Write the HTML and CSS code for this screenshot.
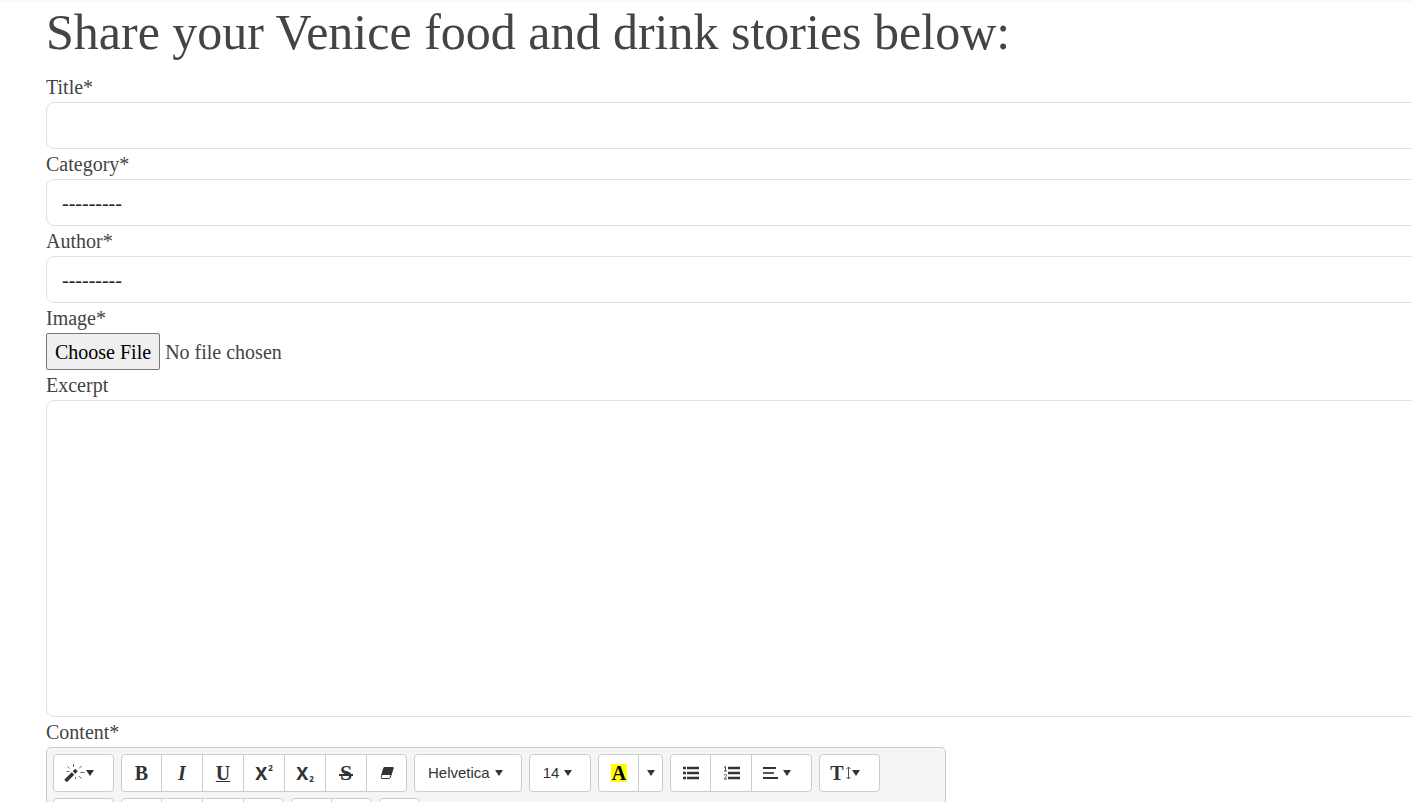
FILE: index.html
```html
<!DOCTYPE html>
<html lang="en">
<head>
<meta charset="utf-8">
<title>Share your story</title>
<link rel="stylesheet" href="styles.css">
</head>
<body>
<main class="page">
  <h1 class="heading">Share your Venice food and drink stories below:</h1>
  <form class="story-form">
    <label class="label" for="title">Title*</label>
    <input class="control" id="title" type="text">
    <label class="label" for="category">Category*</label>
    <select class="control" id="category"><option>---------</option></select>
    <label class="label" for="author">Author*</label>
    <select class="control" id="author"><option>---------</option></select>
    <label class="label" for="image">Image*</label>
    <input class="file" id="image" type="file">
    <label class="label" for="excerpt">Excerpt</label>
    <textarea class="control area" id="excerpt" rows="10"></textarea>
    <label class="label" for="content">Content*</label>
    <div class="editor" id="content">
      <div class="toolbar">
        <div class="group">
          <button class="tool wide" type="button"><svg width="22" height="20" viewBox="0 0 22 20"><path d="M1.500 18 9 10.500" stroke="#333" stroke-width="3.600"/><path d="M10 9.500 12.500 7" stroke="#333" stroke-width="3.600"/><path d="M9.500 1v3M3.500 3.500l2 2M15 5.500l2.500-2.500M2.500 8.500h3M16.500 9.500h4M15 13l2.500 2.500M11.500 14v2" stroke="#666"/></svg><span class="caret"></span></button>
        </div>
        <div class="group">
          <button class="tool serif" type="button">B</button>
          <button class="tool serif italic" type="button">I</button>
          <button class="tool serif underline" type="button">U</button>
          <button class="tool sans" type="button">X<sup class="script">2</sup></button>
          <button class="tool sans" type="button">X<sub class="script">2</sub></button>
          <button class="tool serif strike" type="button"><s class="struck">S</s></button>
          <button class="tool" type="button"><svg width="14" height="14" viewBox="0 0 14 14"><path d="M4.600 1.500h7.900q.8 0 .5.900l-2.800 9q-.3 1.100-1.300 1.100H1.600q-.8 0-.5-1l2.500-9q.3-1 1-1z" fill="#fff" stroke="#333"/><path d="M4.500 1h8.500q.8 0 .5 1L11.300 9H1.500l2-7q.3-1 1-1z" fill="#333"/></svg></button>
        </div>
        <div class="group"><button class="tool font" type="button">Helvetica<span class="caret"></span></button></div>
        <div class="group"><button class="tool font" type="button">14<span class="caret"></span></button></div>
        <div class="group">
          <button class="tool serif" type="button"><span class="marker">A</span></button>
          <button class="tool narrow" type="button"><span class="caret"></span></button>
        </div>
        <div class="group">
          <button class="tool" type="button"><svg width="16" height="14" viewBox="0 0 16 14"><path d="M0 2h3M0 7h3M0 12h3M4 2h12M4 7h12M4 12h12" stroke="#333" stroke-width="2.600"/></svg></button>
          <button class="tool" type="button"><svg width="17" height="16" viewBox="0 0 17 16"><path d="M5 3h12M5 8h12M5 13h12" stroke="#333" stroke-width="2.600"/><path d="M1 2.500 2.500 1.500V6M1 6h3M1 10.500q0-1 1.300-1T3.500 10.500Q3.500 11.500 1 14h3" fill="none" stroke="#555"/></svg></button>
          <button class="tool wide" type="button"><svg class="spaced" width="15" height="14" viewBox="0 0 15 14"><path d="M0 2h13M0 12h15" stroke="#333" stroke-width="2"/><path d="M0 7h11" stroke="#556" stroke-width="2"/></svg><span class="caret"></span></button>
        </div>
        <div class="group"><button class="tool serif wide" type="button">T<svg width="8" height="14" viewBox="0 0 8 14"><path d="M4.500 1v12M2.500 3l2-2 2 2M2.500 11l2 2 2-2" fill="none" stroke="#456"/></svg><span class="caret"></span></button></div>
      </div>
      <div class="toolbar">
        <div class="group"><button class="tool wide" type="button"></button></div>
        <div class="group">
          <button class="tool" type="button"></button>
          <button class="tool" type="button"></button>
          <button class="tool" type="button"></button>
          <button class="tool" type="button"></button>
        </div>
        <div class="group">
          <button class="tool" type="button"></button>
          <button class="tool" type="button"></button>
        </div>
        <div class="group"><button class="tool" type="button"></button></div>
      </div>
    </div>
  </form>
</main>
</body>
</html>
```
FILE: styles.css
```css
* { box-sizing: border-box; }
body {
  margin: 0;
  color: #444;
  background: #fff;
  font: 20px/30px "Liberation Serif", "Times New Roman", serif;
}
.page {
  height: 100vh;
  overflow: hidden;
  padding-left: 46px;
  border-top: 2px solid #f9f9f9;
}
.heading {
  margin: 0 0 10px;
  font-size: 50px;
  line-height: 60px;
  font-weight: 400;
}
/* The form runs past the right edge of the window. */
.story-form {
  display: flex;
  flex-direction: column;
  align-items: flex-start;
  margin-right: -40px;
}
.label { display: block; }
.control {
  display: block;
  width: 100%;
  height: 47px;
  margin: 0;
  padding: 8px 15px;
  border: 1px solid #dee2e6;
  border-radius: 8px;
  background: #fff;
  color: #212529;
  font: inherit;
  appearance: none;
}
.area {
  height: auto;
  padding-bottom: 7px;
  resize: none;
}
.file {
  color: inherit;
  font: inherit;
  height: 37px;
}
.file::file-selector-button {
  height: 37px;
  margin: 0 5px 0 0;
  padding: 0 8px;
  border: 1px solid #767676;
  border-radius: 2px;
  background: #efefef;
  color: #000;
  font: inherit;
}
.editor {
  display: flex;
  flex-direction: column;
  gap: 6px;
  width: 900px;
  padding: 6px;
  border: 1px solid #ccc;
  border-radius: 5px;
  background: #f5f5f5;
}
.toolbar {
  display: flex;
  gap: 7px;
}
.group { display: flex; }
.tool {
  display: flex;
  align-items: center;
  justify-content: center;
  width: 42px;
  height: 38px;
  margin: 0;
  padding: 0 0 1px;
  border: 1px solid #ccc;
  background: #fff;
  color: #333;
}
.tool + .tool { margin-left: -1px; }
.tool:first-child {
  width: 41px;
  border-top-left-radius: 4px;
  border-bottom-left-radius: 4px;
}
.tool:last-child {
  width: 41px;
  border-top-right-radius: 4px;
  border-bottom-right-radius: 4px;
}
.group .tool.wide {
  width: 61px;
  padding-right: 10px;
}
.group .tool.narrow { width: 25px; }
.serif { font: bold 20px/20px "Liberation Serif", serif; }
.sans { font: bold 18px/20px "Noto Sans", sans-serif; }
.italic { font-style: italic; }
.underline { text-decoration: underline 1px; }
.strike { font-size: 22px; }
.struck {
  padding: 0 1px;
  text-decoration: none;
  background: linear-gradient(#333, #333) center 11px / 100% 2px no-repeat;
}
.group .tool.font {
  width: auto;
  padding: 0 18px 1px 13px;
  font: 15px/20px "Liberation Sans", Arial, sans-serif;
}
.script {
  margin-left: 1px;
  font-size: 8px;
  line-height: 8px;
}
sup.script { align-self: flex-start; margin-top: 9px; }
sub.script { align-self: flex-end; margin-bottom: 7px; }
.marker {
  padding: 0 1px;
  line-height: 18px;
  background: #ff0;
  color: #000;
}
.spaced { margin-right: 5px; }
.caret {
  border: 4px solid transparent;
  border-top: 6px solid #333;
  border-bottom: 0;
}
.font .caret { margin-left: 5px; }
```
